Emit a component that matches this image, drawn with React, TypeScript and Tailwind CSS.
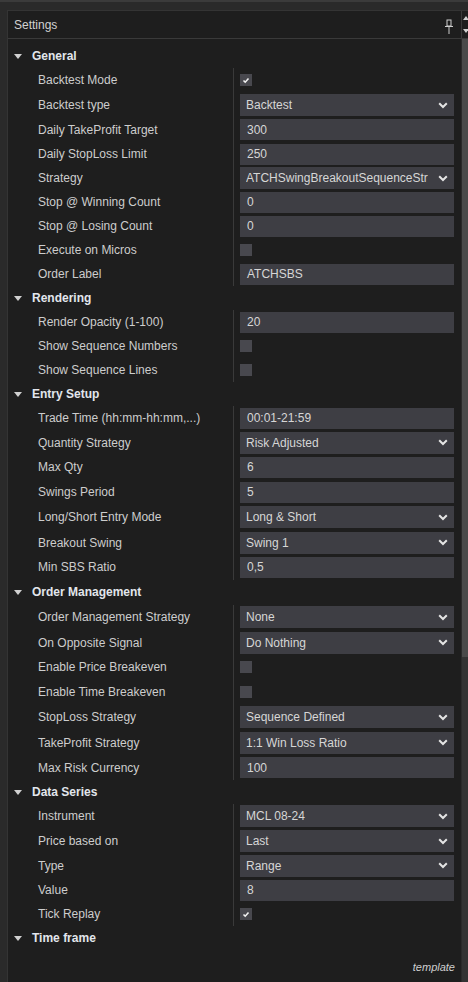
import React from 'react';

type Row =
  | { kind: 'h'; label: string; h: number }
  | { kind: 't'; label: string; value: string; h: number }
  | { kind: 'd'; label: string; value: string; h: number }
  | { kind: 'c'; label: string; checked: boolean; h: number };

// row heights differ slightly in the original grid, keep them per row
const heightClass: Record<number, string> = {
  24: 'h-[24px]',
  24.5: 'h-[24.5px]',
  25: 'h-[25px]',
  25.5: 'h-[25.5px]',
};

const rows: Row[] = [
  { kind: 'h', label: 'General', h: 24 },
  { kind: 'c', label: 'Backtest Mode', checked: true, h: 24.5 },
  { kind: 'd', label: 'Backtest type', value: 'Backtest', h: 25 },
  { kind: 't', label: 'Daily TakeProfit Target', value: '300', h: 24.5 },
  { kind: 't', label: 'Daily StopLoss Limit', value: '250', h: 24 },
  { kind: 'd', label: 'Strategy', value: 'ATCHSwingBreakoutSequenceStr', h: 24 },
  { kind: 't', label: 'Stop @ Winning Count', value: '0', h: 24 },
  { kind: 't', label: 'Stop @ Losing Count', value: '0', h: 24 },
  { kind: 'c', label: 'Execute on Micros', checked: false, h: 24 },
  { kind: 't', label: 'Order Label', value: 'ATCHSBS', h: 24 },
  { kind: 'h', label: 'Rendering', h: 24 },
  { kind: 't', label: 'Render Opacity (1-100)', value: '20', h: 24 },
  { kind: 'c', label: 'Show Sequence Numbers', checked: false, h: 24 },
  { kind: 'c', label: 'Show Sequence Lines', checked: false, h: 24 },
  { kind: 'h', label: 'Entry Setup', h: 24 },
  { kind: 't', label: 'Trade Time (hh:mm-hh:mm,...)', value: '00:01-21:59', h: 24.5 },
  { kind: 'd', label: 'Quantity Strategy', value: 'Risk Adjusted', h: 24.5 },
  { kind: 't', label: 'Max Qty', value: '6', h: 24.5 },
  { kind: 't', label: 'Swings Period', value: '5', h: 25 },
  { kind: 'd', label: 'Long/Short Entry Mode', value: 'Long & Short', h: 25.5 },
  { kind: 'd', label: 'Breakout Swing', value: 'Swing 1', h: 25 },
  { kind: 't', label: 'Min SBS Ratio', value: '0,5', h: 24.5 },
  { kind: 'h', label: 'Order Management', h: 25 },
  { kind: 'd', label: 'Order Management Strategy', value: 'None', h: 25.5 },
  { kind: 'd', label: 'On Opposite Signal', value: 'Do Nothing', h: 25 },
  { kind: 'c', label: 'Enable Price Breakeven', checked: false, h: 24.5 },
  { kind: 'c', label: 'Enable Time Breakeven', checked: false, h: 25 },
  { kind: 'd', label: 'StopLoss Strategy', value: 'Sequence Defined', h: 25.5 },
  { kind: 'd', label: 'TakeProfit Strategy', value: '1:1 Win Loss Ratio', h: 25.5 },
  { kind: 't', label: 'Max Risk Currency', value: '100', h: 24.5 },
  { kind: 'h', label: 'Data Series', h: 24 },
  { kind: 'd', label: 'Instrument', value: 'MCL 08-24', h: 24.5 },
  { kind: 'd', label: 'Price based on', value: 'Last', h: 25 },
  { kind: 'd', label: 'Type', value: 'Range', h: 24.5 },
  { kind: 't', label: 'Value', value: '8', h: 24 },
  { kind: 'c', label: 'Tick Replay', checked: true, h: 24 },
  { kind: 'h', label: 'Time frame', h: 24 },
];

const Chevron = () => (
  <svg width="10" height="7" viewBox="0 0 10 7" className="shrink-0">
    <polyline points="1.2,1.2 5,5 8.8,1.2" fill="none" stroke="#e4e4e4" strokeWidth="2" />
  </svg>
);

const Check = () => (
  <svg width="8" height="7" viewBox="0 0 8 7">
    <polyline points="1.5,3.5 3.2,5.2 6.5,1.5" fill="none" stroke="#f2f2f2" strokeWidth="1.6" />
  </svg>
);

const Field: React.FC<{ row: Row }> = ({ row }) => {
  if (row.kind === 't') {
    return (
      <div className="h-[21px] bg-[#3e3e44] flex items-center pl-[7px] text-[#d6d6d6]">
        {row.value}
      </div>
    );
  }
  if (row.kind === 'd') {
    return (
      <div className="h-[22px] bg-[#3e3e44] flex items-center pl-[6px] pr-[6px] gap-[3px] text-[#d6d6d6] min-w-0">
        <span className="flex-1 min-w-0 overflow-hidden whitespace-nowrap">{row.value}</span>
        <Chevron />
      </div>
    );
  }
  if (row.kind === 'c') {
    return (
      <div className="w-[12px] h-[12px] bg-[#48484e] flex items-center justify-center">
        {row.checked && <Check />}
      </div>
    );
  }
  return null;
};

export default function App() {
  return (
    <div className="w-[468px] h-[982px] bg-[#2a2a2a] overflow-hidden flex flex-col font-['Liberation_Sans',Arial,sans-serif] text-[12px]">
      {/* outer frame strip */}
      <div className="h-[10px] shrink-0 border-t-2 border-[#3b3b3b]" />

      <div className="flex-1 flex min-h-0">
        <div className="w-[7px] shrink-0" />

        <div className="w-[461px] flex flex-col bg-[#1e1e1e] border-l border-t border-[#343434] min-h-0">
          {/* title bar */}
          <div className="h-[28px] shrink-0 flex items-center border-b border-[#3a3a3a]">
            <span className="flex-1 pl-[6px] text-[#d2d2d2] text-[12px]">Settings</span>
            <svg width="10" height="16" viewBox="0 0 10 16" className="mr-[7px] mt-[4px]">
              <rect x="3" y="1" width="4" height="6" fill="none" stroke="#cfcfcf" strokeWidth="1" />
              <line x1="1" y1="7.5" x2="9" y2="7.5" stroke="#cfcfcf" strokeWidth="1" />
              <line x1="5" y1="8" x2="5" y2="15" stroke="#9a9a9a" strokeWidth="1.4" />
            </svg>
            <div className="w-[7px] h-full border-l border-[#3a3a3a] flex flex-col justify-between py-[5px] pl-[1px]">
              <svg width="6" height="4" viewBox="0 0 6 4">
                <polygon points="0,4 3,0 6,4" fill="#cfcfcf" />
              </svg>
              <svg width="6" height="4" viewBox="0 0 6 4">
                <polygon points="0,0 6,0 3,4" fill="#cfcfcf" />
              </svg>
            </div>
          </div>

          {/* body */}
          <div className="flex-1 flex min-h-0">
            <div className="flex-1 min-w-0 flex flex-col pt-[5px]">
              {rows.map((row, i) =>
                row.kind === 'h' ? (
                  <div key={i} className={`${heightClass[row.h]} flex items-center shrink-0`}>
                    <svg width="8" height="5" viewBox="0 0 8 5" className="ml-[6px] mr-[10px]">
                      <polygon points="0,0 8,0 4,5" fill="#d0d0d0" />
                    </svg>
                    <span className="font-bold text-[#e2e6ec]">{row.label}</span>
                  </div>
                ) : (
                  <div key={i} className={`${heightClass[row.h]} flex shrink-0`}>
                    <div className="w-[226px] shrink-0 border-r border-[#3a3a3a] pl-[30px] flex items-center text-[#cdcdcd] whitespace-nowrap">
                      {row.label}
                    </div>
                    <div className="flex-1 min-w-0 pl-[6px] pr-[7px] flex flex-col justify-center">
                      <Field row={row} />
                    </div>
                  </div>
                ),
              )}
              <div className="flex-1" />
              <div className="flex justify-end pr-[6px] pb-[7px] italic text-[11px] text-[#cfcfcf]">template</div>
            </div>

            {/* scrollbar */}
            <div className="w-[7px] shrink-0 bg-[#333333] border-l border-[#2a2a2a] flex flex-col">
              <div className="h-[618px] bg-[#4a4a4a]" />
            </div>
          </div>
        </div>
      </div>
    </div>
  );
}
